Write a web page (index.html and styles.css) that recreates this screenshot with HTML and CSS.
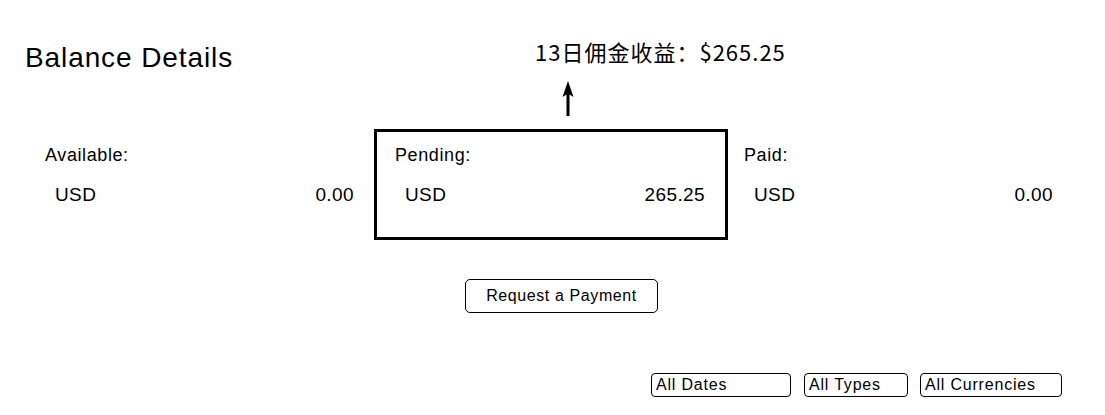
FILE: index.html
```html
<!DOCTYPE html>
<html lang="en">
<head>
<meta charset="utf-8">
<title>Balance Details</title>
<link rel="stylesheet" href="styles.css">
</head>
<body>
<div class="page">
  <header class="top">
    <h1 class="title">Balance Details</h1>
    <div class="note">
      <div class="note-text">13日佣金收益：$265.25</div>
      <svg class="note-arrow" width="14" height="36" viewBox="0 0 14 36" aria-hidden="true">
        <path d="M7 0 L12.5 16 L8.5 13.5 L8.5 35 L5.5 35 L5.5 13.5 L1.5 16 Z" fill="#000"/>
      </svg>
    </div>
  </header>

  <section class="balances">
    <div class="col col-available">
      <div class="label">Available:</div>
      <div class="row"><span class="cur">USD</span><span class="amt">0.00</span></div>
    </div>
    <div class="col col-pending">
      <div class="label">Pending:</div>
      <div class="row"><span class="cur">USD</span><span class="amt">265.25</span></div>
    </div>
    <div class="col col-paid">
      <div class="label">Paid:</div>
      <div class="row"><span class="cur">USD</span><span class="amt">0.00</span></div>
    </div>
  </section>

  <div class="actions">
    <button class="btn" type="button">Request a Payment</button>
  </div>

  <div class="filters">
    <div class="select sel-dates">All Dates</div>
    <div class="select sel-types">All Types</div>
    <div class="select sel-cur">All Currencies</div>
  </div>
</div>
</body>
</html>
```

FILE: styles.css
```css
html, body {
  margin: 0;
  padding: 0;
  background: #fff;
  color: #000;
}

body {
  font-family: "Liberation Sans", Arial, "Noto Sans CJK SC", sans-serif;
  -webkit-font-smoothing: none;
}

.page {
  width: 1105px;
  height: 415px;
  overflow: hidden;
}

.top {
  display: flex;
  align-items: flex-start;
  padding-left: 25px;
  height: 129px;
}

.title {
  margin: 42px 0 0 0;
  font-size: 28px;
  line-height: 32px;
  font-weight: normal;
  letter-spacing: 0.9px;
  width: 510px;
  flex: 0 0 auto;
}

.note {
  display: flex;
  flex-direction: column;
  align-items: flex-start;
  margin-top: 36px;
}

.note-text {
  font-family: "Noto Sans CJK SC", "Noto Sans CJK JP", sans-serif;
  font-size: 22px;
  line-height: 30px;
  letter-spacing: 1px;
  white-space: nowrap;
}

.note-arrow {
  display: block;
  margin: 15px 0 0 26px;
}

.balances {
  display: flex;
  padding-left: 25px;
  height: 111px;
}

.col {
  box-sizing: border-box;
  padding-top: 16px;
}

.col-available {
  width: 349px;
  padding-left: 20px;
  padding-right: 20px;
}

.col-pending {
  width: 354px;
  border: 3px solid #000;
  padding-top: 13px;
  padding-left: 18px;
  padding-right: 20px;
}

.col-paid {
  width: 345px;
  padding-left: 16px;
  padding-right: 20px;
}

.label {
  font-size: 18px;
  line-height: 20px;
  letter-spacing: 0.6px;
}

.row {
  display: flex;
  justify-content: space-between;
  margin-top: 19px;
  padding-left: 10px;
  font-size: 19px;
  line-height: 22px;
  letter-spacing: 0.4px;
}

.actions {
  padding-left: 465px;
  padding-top: 39px;
}

.btn {
  display: block;
  box-sizing: border-box;
  width: 193px;
  height: 34px;
  margin: 0;
  padding: 0;
  border: 1px solid #000;
  border-radius: 5px;
  background: #fff;
  color: #000;
  font-family: "Liberation Sans", Arial, sans-serif;
  font-size: 16px;
  letter-spacing: 0.6px;
  text-align: center;
}

.filters {
  display: flex;
  justify-content: flex-end;
  gap: 12px;
  padding-right: 43px;
  margin-top: 60px;
}

.select {
  box-sizing: border-box;
  height: 24px;
  border: 1px solid #000;
  border-radius: 4px;
  padding-left: 4px;
  font-size: 16px;
  line-height: 22px;
  letter-spacing: 0.8px;
  white-space: nowrap;
}

.sel-dates { width: 140px; margin-right: 1px; }
.sel-types { width: 104px; }
.sel-cur { width: 142px; }
```
